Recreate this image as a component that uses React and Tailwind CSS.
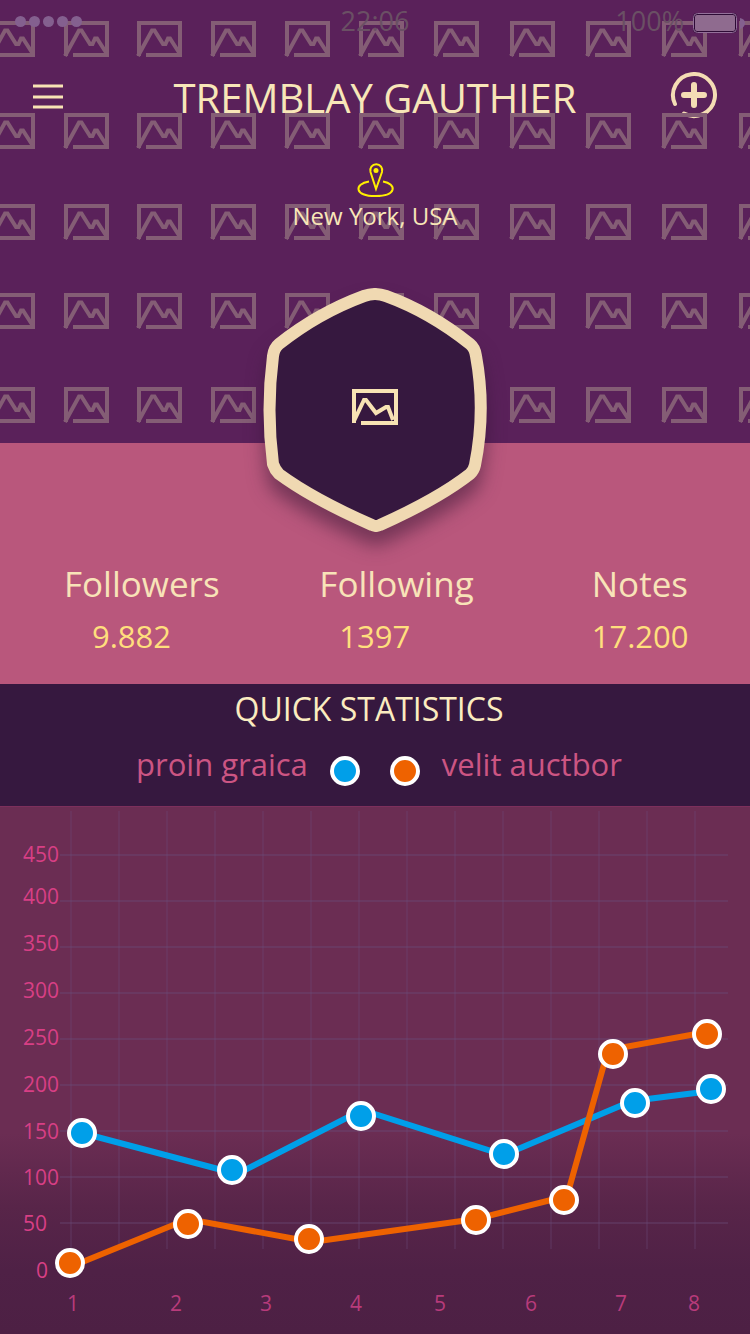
const tileColumns = [-10, 64, 137, 211, 285, 359, 434, 510, 586, 662, 739];
const tileRows = [21, 113, 204, 293, 387];

const stats = [
  { label: "Followers", value: "9.882", indent: "pl-7" },
  { label: "Following", value: "1397", indent: "pl-5" },
  { label: "Notes", value: "17.200", indent: "pl-0" },
];

const yLabels = [
  { text: "450", x: 23, y: 56 },
  { text: "400", x: 23, y: 98 },
  { text: "350", x: 23, y: 145 },
  { text: "300", x: 23, y: 192 },
  { text: "250", x: 23, y: 239 },
  { text: "200", x: 23, y: 286 },
  { text: "150", x: 23, y: 333 },
  { text: "100", x: 23, y: 379 },
  { text: "50", x: 23, y: 425 },
  { text: "0", x: 36, y: 472 },
];

const xLabels = [73, 176, 266, 356, 440, 531, 621, 694];

const gridRows = [49, 95, 141, 187, 233, 279, 325, 371, 417];
const gridColumns = [
  71, 119, 167, 215, 263, 311, 359, 407, 455, 503, 551, 599, 647, 695,
];

const series = [
  {
    name: "proin graica",
    color: "#009fe9",
    line: "82,327 237,368 362,304 504,349 632,295 711,285",
    points: [
      [82, 327],
      [232, 364],
      [361, 310],
      [504, 348],
      [635, 297],
      [711, 283],
    ],
  },
  {
    name: "velit auctbor",
    color: "#ee6200",
    line: "70,461 188,413 312,436 476,413 567,390 608,244 707,226",
    points: [
      [70, 457],
      [188, 418],
      [309, 433],
      [476, 414],
      [564, 394],
      [613, 248],
      [707, 228],
    ],
  },
];

const HeaderPattern = () => (
  <svg
    className="absolute inset-0 w-full h-full pointer-events-none"
    viewBox="0 0 750 443"
    preserveAspectRatio="xMidYMin slice"
    fill="none"
    stroke="#845d75"
    strokeWidth="4"
    aria-hidden="true"
  >
    <defs>
      <g id="tile">
        <path d="M2 35V2H43V34H9" />
        <path d="M1 35L15 9.500H17.500L26 23H28.500L31 17.500H33L43 33" />
      </g>
    </defs>
    {tileRows.map((y) =>
      tileColumns.map((x) => (
        <use key={`${x}-${y}`} href="#tile" x={x} y={y} />
      )),
    )}
  </svg>
);

const StatusBar = () => (
  <div className="relative z-10 grid grid-cols-3 items-center px-3 text-[27px] leading-[42px] text-[#6a5064]">
    <div className="flex gap-[3px] pl-[3px]">
      {[1, 2, 3, 4, 5].map((dot) => (
        <span key={dot} className="size-[11px] rounded-full bg-[#84608f]" />
      ))}
    </div>
    <span className="text-center">22:06</span>
    <div className="flex items-center justify-end gap-2">
      <span>100%</span>
      <svg
        className="w-14 h-6 -mr-[10px] mt-[6px] shrink-0"
        viewBox="0 0 56 24"
        aria-hidden="true"
      >
        <rect x="1" y="1" width="44" height="20" rx="4" fill="#2d0b35" />
        <rect
          x="1.5"
          y="1.5"
          width="43"
          height="19"
          rx="4"
          fill="none"
          stroke="#94709a"
        />
        <rect x="3" y="3" width="40" height="16" rx="2" fill="#8f6b8f" />
        <path d="M48 6Q53 7 53 11T48 17Z" fill="#84608f" />
      </svg>
    </div>
  </div>
);

const Avatar = () => (
  <svg
    className="relative z-10 w-56 h-[244px] mx-auto mt-14 -mb-[89px] overflow-visible drop-shadow-[0_14px_9px_rgba(50,20,50,0.5)]"
    viewBox="263 288 224 244"
    fill="none"
    role="img"
    aria-label="Profile picture"
  >
    <path
      d="M364 296Q375 292 386 296Q430 312 470 344Q475 348 476 356Q486 410 475 465Q474 470 470 474Q438 499 380 525Q376 527 372 525Q313 499 279 474Q275 470 273 464Q266 410 273 356Q274 348 279 344Q318 313 364 296Z"
      fill="#36183f"
      stroke="#f0d9b2"
      strokeWidth="12"
      strokeLinejoin="round"
    />
    <g stroke="#f8e3b4" strokeWidth="4">
      <path d="M354 423V391H396V423H361" />
      <path d="M354 421L364 400H366L376 413L386 407H388L393 420" />
    </g>
  </svg>
);

const Chart = () => (
  <svg
    className="block w-full"
    viewBox="0 0 750 528"
    role="img"
    aria-label="Quick statistics chart"
  >
    <defs>
      <linearGradient id="chartShade" x1="0" y1="0" x2="0" y2="1">
        <stop offset="0" stopColor="#6b2d53" />
        <stop offset="0.62" stopColor="#6b2d53" />
        <stop offset="0.76" stopColor="#582549" />
        <stop offset="0.88" stopColor="#4f2146" />
        <stop offset="1" stopColor="#4d2044" />
      </linearGradient>
    </defs>
    <rect width="750" height="528" fill="url(#chartShade)" />
    <rect width="750" height="1" fill="#7d2f5c" />

    {/* GRID */}
    <g stroke="#6a4c7a" strokeOpacity="0.35" strokeWidth="2">
      {gridRows.map((y) => (
        <line key={y} x1="60" x2="728" y1={y} y2={y} />
      ))}
      {gridColumns.map((x) => (
        <line key={x} x1={x} x2={x} y1="5" y2="443" strokeOpacity="0.25" />
      ))}
    </g>

    {/* AXIS LABELS */}
    <g fontSize="21" fill="#d83f85">
      {yLabels.map(({ text, x, y }) => (
        <text key={text} x={x} y={y}>
          {text}
        </text>
      ))}
    </g>
    <g fontSize="21" fill="#b83b7b" textAnchor="middle">
      {xLabels.map((x, index) => (
        <text key={x} x={x} y="505">
          {index + 1}
        </text>
      ))}
    </g>

    {/* SERIES */}
    {series.map(({ name, color, line }) => (
      <polyline
        key={name}
        points={line}
        fill="none"
        stroke={color}
        strokeWidth="6"
      />
    ))}
    {series.map(({ name, color, points }) =>
      points.map(([x, y]) => (
        <circle
          key={`${name}-${x}`}
          cx={x}
          cy={y}
          r="13"
          fill={color}
          stroke="#fff"
          strokeWidth="4"
        />
      )),
    )}
  </svg>
);

const App = () => {
  return (
    <main className="w-full font-['Open_Sans','Noto_Sans',sans-serif]">
      {/* HEADER */}
      <header className="relative flow-root bg-[#5a215a] text-[#f8e6b8]">
        <div className="flex items-center justify-between h-[132px] pt-[60px] px-8 -mb-10">
          <button type="button" aria-label="Menu" className="size-12">
            <svg
              className="size-8"
              viewBox="0 0 32 32"
              stroke="#f8e3b4"
              strokeWidth="3"
            >
              <path d="M1 6H31M1 17H31M1 27H31" />
            </svg>
          </button>
          <h1 className="pt-1 text-[40px] leading-[72px]">TREMBLAY GAUTHIER</h1>
          <button type="button" aria-label="Add" className="size-12">
            <svg
              className="size-12"
              viewBox="0 0 48 48"
              fill="none"
              stroke="#f4dcb4"
              strokeLinecap="round"
            >
              <path d="M5 32A21 21 0 1 1 14 41.500" strokeWidth="4" />
              <path d="M24 13V33M14 23H34" strokeWidth="6" />
            </svg>
          </button>
        </div>
        <HeaderPattern />
        <div className="absolute inset-x-0 top-0">
          <StatusBar />
        </div>

        {/* LOCATION */}
        <div className="relative z-10 pt-[68px] flex flex-col items-center">
          <svg
            className="w-10 h-10"
            viewBox="0 0 40 40"
            fill="none"
            stroke="#ffef00"
            strokeWidth="2"
            aria-hidden="true"
          >
            <path d="M21 29L15.500 12A6 6 0 1 1 27 12Z" />
            <circle cx="21" cy="10.500" r="2.500" fill="#ffef00" stroke="none" />
            <path d="M14 21.500C-1 24 -1 36 20.500 36S42 24 28 21.500" />
          </svg>
          <p className="text-[24px] leading-8">New York, USA</p>
        </div>
        <Avatar />
      </header>

      {/* COUNTERS */}
      <dl className="grid grid-cols-[255fr_272fr_158fr] pl-16 pt-[115px] pb-[22px] bg-[#b9577c]">
        {stats.map(({ label, value, indent }) => (
          <div key={label}>
            <dt className="text-[35px] leading-[52px] text-[#f8e3b8]">
              {label}
            </dt>
            <dd className={`text-[31px] leading-[52px] text-[#ffdf7d] ${indent}`}>
              {value}
            </dd>
          </div>
        ))}
      </dl>

      {/* STATISTICS */}
      <section className="bg-[#36183f]">
        <h2 className="pr-3 text-center text-[32px] leading-[50px] text-[#fbecc0]">
          QUICK STATISTICS
        </h2>
        <div className="flex justify-center gap-[22px] mt-[10px] pb-5 pl-2 text-[31px] leading-10 text-[#cc5583]">
          <span>proin graica</span>
          <span className="size-[30px] mt-3 mr-2 rounded-full border-4 border-white bg-[#009fe9]" />
          <span className="size-[30px] mt-3 rounded-full border-4 border-white bg-[#ee6200]" />
          <span>velit auctbor</span>
        </div>
        <Chart />
      </section>
    </main>
  );
};

export default App;
